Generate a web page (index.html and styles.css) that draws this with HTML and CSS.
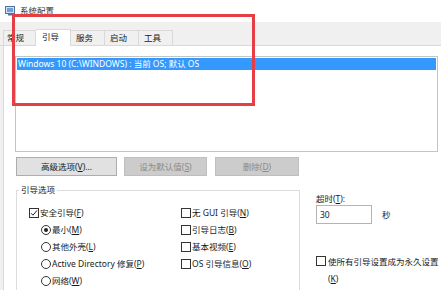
FILE: index.html
```html
<!DOCTYPE html>
<html lang="zh-CN">
<head>
<meta charset="utf-8">
<title>系统配置</title>
<link rel="stylesheet" href="styles.css">
</head>
<body>
<div class="titlebar">
  <svg class="appicon" width="10" height="10" viewBox="0 0 10 10">
    <rect x="0.5" y="0.5" width="9" height="7" fill="#cfe3f7" stroke="#4f74a3"/>
    <rect x="2" y="2" width="6" height="4" fill="#6f9fd6"/>
    <rect x="3" y="8" width="4" height="1.5" fill="#4f74a3"/>
  </svg>
  <span class="title">系统配置</span>
</div>
<div class="tabstrip">
  <div class="tab">常规</div>
  <div class="tab active">引导</div>
  <div class="tab">服务</div>
  <div class="tab">启动</div>
  <div class="tab">工具</div>
</div>
<div class="panel">
  <div class="listbox">
    <div class="item selected">Windows 10 (C:\WINDOWS) : 当前 OS; 默认 OS</div>
  </div>
  <div class="buttons">
    <div class="btn btn-adv">高级选项(<u>V</u>)...</div>
    <div class="btn btn-default disabled">设为默认值(<u>S</u>)</div>
    <div class="btn btn-del disabled">删除(<u>D</u>)</div>
  </div>
  <div class="lower">
    <fieldset class="group">
      <legend>引导选项</legend>
      <div class="cols">
        <div class="col col-left">
          <div class="row"><span class="cb checked"><svg width="8" height="8" viewBox="0 0 8 8"><path d="M1 4.2 L3 6.2 L7 1.4" fill="none" stroke="#222" stroke-width="1"/></svg></span>安全引导(<u>F</u>)</div>
          <div class="row sub"><span class="rb on"></span>最小(<u>M</u>)</div>
          <div class="row sub"><span class="rb"></span>其他外壳(<u>L</u>)</div>
          <div class="row sub"><span class="rb"></span>Active Directory 修复(<u>P</u>)</div>
          <div class="row sub"><span class="rb"></span>网络(<u>W</u>)</div>
        </div>
        <div class="col col-right">
          <div class="row"><span class="cb"></span>无 GUI 引导(<u>N</u>)</div>
          <div class="row"><span class="cb"></span>引导日志(<u>B</u>)</div>
          <div class="row"><span class="cb"></span>基本视频(<u>E</u>)</div>
          <div class="row"><span class="cb"></span>OS 引导信息(<u>O</u>)</div>
        </div>
      </div>
    </fieldset>
    <div class="side">
      <div class="tlabel">超时(<u>T</u>):</div>
      <div class="timeout"><div class="input">30</div><span class="unit">秒</span></div>
      <div class="perm"><span class="cb"></span><span class="permtext">使所有引导设置成为永久设置(<u>K</u>)</span></div>
    </div>
  </div>
</div>
<div class="highlight"></div>
</body>
</html>
```
FILE: styles.css
```css
* { box-sizing: border-box; }
html, body { margin: 0; padding: 0; }
body {
  width: 441px;
  height: 290px;
  overflow: hidden;
  position: relative;
  background: #f0f0f0;
  font-family: "Noto Sans", "Noto Sans CJK SC", sans-serif;
  font-size: 8.5px;
  line-height: 12px;
  color: #1a1a1a;
}
u { text-decoration: underline; text-underline-offset: 1px; }

.titlebar {
  height: 22px;
  background: #fff;
  display: flex;
  align-items: center;
  padding-left: 5px;
  gap: 5px;
}
.appicon { display: block; }
.title { color: #333; font-size: 8.5px; }

.tabstrip {
  height: 24px;
  display: flex;
  align-items: flex-end;
  padding-left: 3px;
  border-bottom: 1px solid #d9d9d9;
}
.tab {
  height: 15px;
  padding: 0 11px 0 5px;
  border: 1px solid #d9d9d9;
  border-bottom: none;
  border-left: none;
  background: #f0f0f0;
  display: flex;
  align-items: center;
  color: #1a1a1a;
}
.tab:first-child { border-left: 1px solid #d9d9d9; padding-left: 3px; }
.tab.active {
  background: #fff;
  height: 17px;
  margin-bottom: -1px;
  padding-left: 6px;
  padding-bottom: 3px;
  position: relative;
}

.panel {
  background: #fff;
  margin-left: 3px;
  border-left: 1px solid #d9d9d9;
  height: 244px;
  padding: 10px 0 0 11px;
}
.listbox {
  width: 423px;
  height: 96px;
  border: 1px solid #c4c4c4;
  padding: 1px;
}
.item {
  height: 12px;
  line-height: 12px;
  padding-left: 1px;
  white-space: nowrap;
}
.item.selected { background: #3399ff; color: #fff; }

.buttons {
  display: flex;
  margin-top: 5px;
  margin-left: 1px;
}
.btn {
  height: 19px;
  border: 1px solid #adadad;
  background: #e1e1e1;
  display: flex;
  align-items: center;
  justify-content: center;
  color: #1a1a1a;
}
.btn.disabled { background: #cccccc; border-color: #bfbfbf; color: #8a8a8a; }
.btn-adv { width: 101px; }
.btn-default { width: 83px; margin-left: 7px; }
.btn-del { width: 84px; margin-left: 8px; }

.lower {
  display: flex;
  margin-top: 8px;
}
.group {
  margin: 0 0 0 1px;
  width: 284px;
  height: 110px;
  border: 1px solid #dcdcdc;
  padding: 8px 0 0 2px;
}
.group legend {
  padding: 0 2px;
  line-height: 12px;
  color: #1a1a1a;
}
.cols {
  display: grid;
  grid-template-columns: 152px 1fr;
  padding-left: 10px;
}
.row {
  height: 17px;
  display: flex;
  align-items: center;
  white-space: nowrap;
}
.row.sub { padding-left: 12px; }
.cb {
  width: 10px;
  height: 10px;
  border: 1px solid #333;
  background: #fff;
  margin-right: 1px;
  flex: none;
  display: flex;
  align-items: center;
  justify-content: center;
}
.cb svg { display: block; }
.rb {
  width: 10px;
  height: 10px;
  border: 1px solid #333;
  border-radius: 50%;
  background: #fff;
  margin-right: 1px;
  flex: none;
  display: flex;
  align-items: center;
  justify-content: center;
}
.rb.on::after {
  content: "";
  width: 4px;
  height: 4px;
  border-radius: 50%;
  background: #222;
}

.side {
  margin-left: 16px;
  padding-top: 9px;
}
.tlabel { line-height: 12px; }
.timeout {
  display: flex;
  align-items: center;
}
.input {
  width: 56px;
  height: 19px;
  border: 1px solid #b4b4b4;
  padding-left: 3px;
  display: flex;
  align-items: center;
}
.unit { margin-left: 10px; }
.perm {
  display: flex;
  align-items: flex-start;
  margin-top: 29px;
}
.perm .cb { margin-top: 3px; }
.permtext {
  width: 112px;
  line-height: 17px;
  margin-left: 1px;
}

.highlight {
  position: absolute;
  left: 12px;
  top: 14px;
  width: 243px;
  height: 92px;
  border: 3px solid #e53e45;
  pointer-events: none;
}
```
